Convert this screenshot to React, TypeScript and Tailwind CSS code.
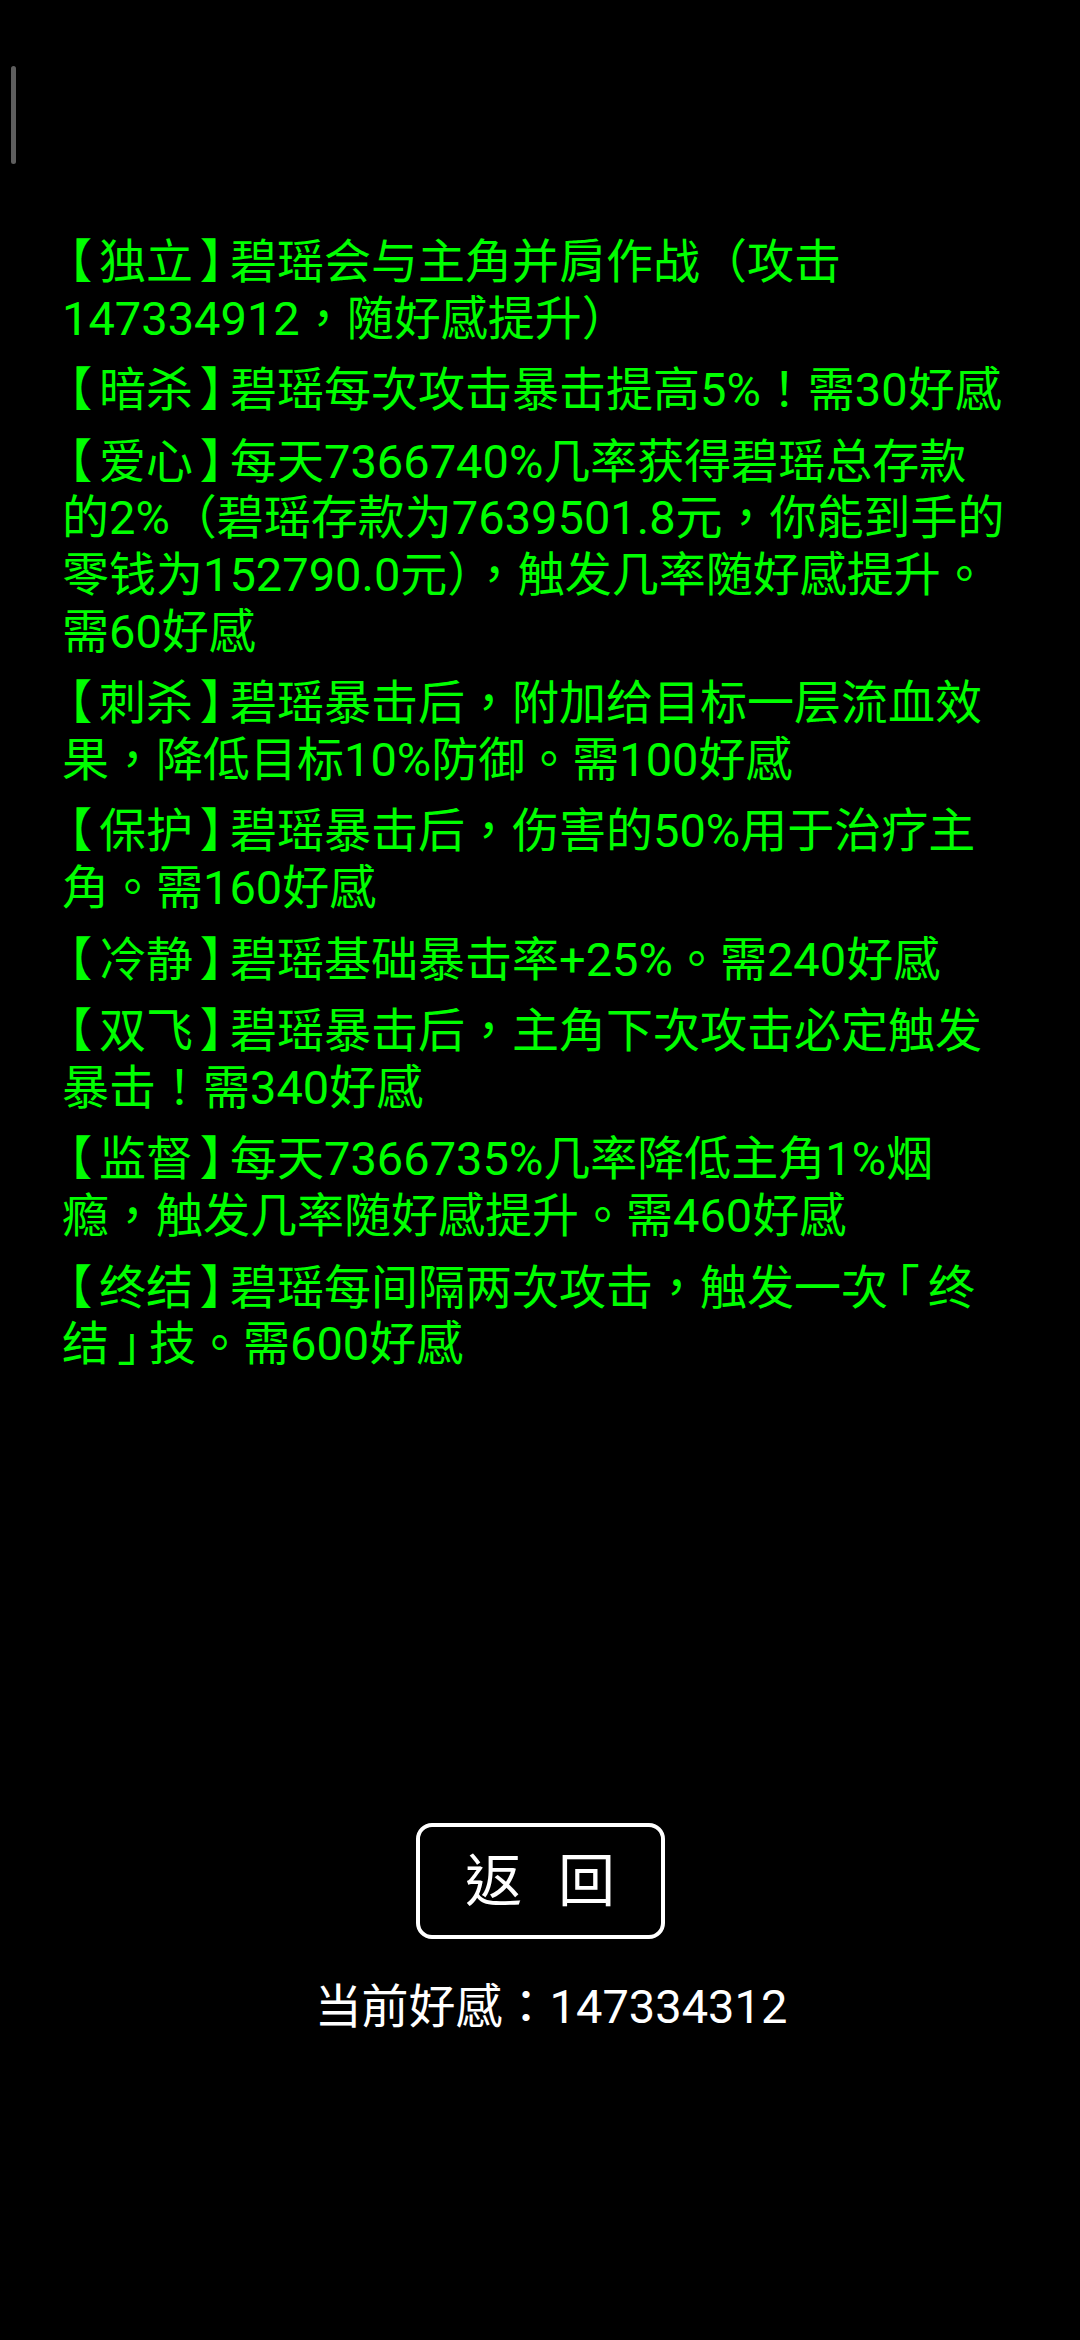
import React from 'react';

const lines: string[][] = [
  ['【独立】碧瑶会与主角并肩作战（攻击', '147334912，随好感提升）'],
  ['【暗杀】碧瑶每次攻击暴击提高5%！需30好感'],
  [
    '【爱心】每天7366740%几率获得碧瑶总存款',
    '的2%（碧瑶存款为7639501.8元，你能到手的',
    '零钱为152790.0元），触发几率随好感提升。',
    '需60好感',
  ],
  ['【刺杀】碧瑶暴击后，附加给目标一层流血效', '果，降低目标10%防御。需100好感'],
  ['【保护】碧瑶暴击后，伤害的50%用于治疗主', '角。需160好感'],
  ['【冷静】碧瑶基础暴击率+25%。需240好感'],
  ['【双飞】碧瑶暴击后，主角下次攻击必定触发', '暴击！需340好感'],
  ['【监督】每天7366735%几率降低主角1%烟', '瘾，触发几率随好感提升。需460好感'],
  ['【终结】碧瑶每间隔两次攻击，触发一次「终', '结」技。需600好感'],
];

const font = { fontFamily: 'Roboto, "Noto Sans CJK TC", sans-serif' };

// brackets: half-width glyph centred in a narrower box, as in the original
function Line({ text }: { text: string }) {
  const parts = text.split(/([【】「」])/);
  return (
    <span className="block whitespace-nowrap">
      {parts.map((p, i) => {
        if (p === '【' || p === '】')
          return (
            <span key={i} className="inline-block w-[37px] text-center [font-feature-settings:'halt']">
              {p}
            </span>
          );
        if (p === '「' || p === '」')
          return (
            <span key={i} className="inline-block w-[40px] text-center [font-feature-settings:'halt']">
              {p}
            </span>
          );
        return <React.Fragment key={i}>{p}</React.Fragment>;
      })}
    </span>
  );
}

export default function App() {
  return (
    <div className="relative min-h-[2340px] w-full bg-black" style={font}>
      {/* scroll indicator */}
      <div className="absolute left-[11px] top-[66px] h-[98px] w-[5px] rounded-full bg-[#5e5e5e]" />

      <div className="flex h-[1823px] flex-col gap-[15px] pl-[62px] pr-[30px] pt-[234px]">
        {lines.map((para, i) => (
          <p key={i} className="text-[47px] leading-[56.6px] text-[#00ff00]">
            {para.map((l, j) => (
              <Line key={j} text={l} />
            ))}
          </p>
        ))}
      </div>

      <div className="flex flex-col items-center">
        <button className="flex h-[116px] w-[249px] items-center justify-center gap-[36px] rounded-[16px] border-[4px] border-white text-[57px] leading-none text-white">
          <span>返</span>
          <span>回</span>
        </button>
        <p className="ml-[22px] mt-[40px] text-[47px] leading-[56px] text-white">当前好感：147334312</p>
      </div>
    </div>
  );
}
